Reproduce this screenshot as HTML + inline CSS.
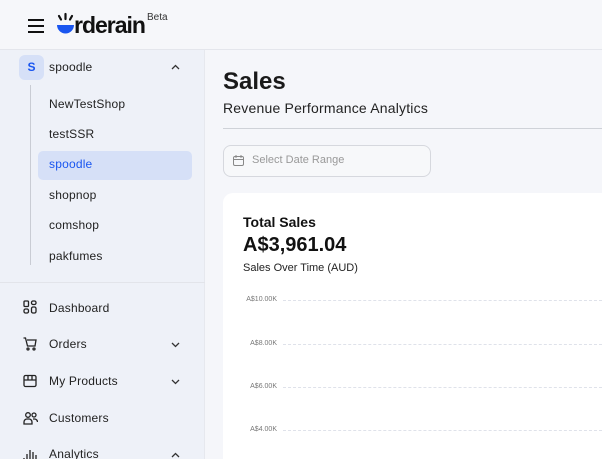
<!DOCTYPE html>
<html><head><style>
*{margin:0;padding:0;box-sizing:border-box}
html,body{width:602px;height:459px;overflow:hidden}
body{font-family:"Liberation Sans",sans-serif;background:#f5f6fa;position:relative;color:#111}
.hdr{position:absolute;left:0;top:0;width:602px;height:50px;background:#f6f7fa;border-bottom:1px solid #e4e6ec}
.side{position:absolute;left:0;top:50px;width:205px;height:409px;background:#eef1f8;border-right:1px solid #e6e8ee}
.abs{position:absolute}
.t{position:absolute;font-size:12px;color:#222;letter-spacing:.2px}
.nav{position:absolute;left:49px;font-size:12px;color:#222;letter-spacing:.2px}
.chev{position:absolute;left:171px}
.grid{position:absolute;left:283px;right:0;border-top:1px dashed #dfe2ea}
.gl{position:absolute;width:50px;left:227px;text-align:right;font-size:7px;color:#777}
</style></head><body>
<div class="hdr">
 <div class="abs" style="left:28px;top:19px;width:16px;height:2px;background:#111"></div>
 <div class="abs" style="left:28px;top:25px;width:16px;height:2px;background:#111"></div>
 <div class="abs" style="left:28px;top:31px;width:16px;height:2px;background:#111"></div>
 <svg class="abs" style="left:55px;top:12px" width="22" height="25" viewBox="0 0 22 25"><path d="M2 13h17a8.5 8.5 0 0 1-17 0z" fill="#1a56f0"/><path d="M10.5 2v5M4 4l2 3.5M17 4l-2 3.5" stroke="#111" stroke-width="2.2" stroke-linecap="round"/></svg>
 <div class="abs" style="left:74px;top:12px;font-size:23px;font-weight:bold;letter-spacing:-1px;color:#111">rderain</div>
 <div class="abs" style="left:147px;top:12px;font-size:10px;color:#333">Beta</div>
</div>
<div class="side">
 <div class="abs" style="left:19px;top:5px;width:25px;height:25px;border-radius:6px;background:#d6e0f7;color:#1a56f0;font-size:12px;font-weight:bold;text-align:center;line-height:25px">S</div>
 <div class="t" style="left:49px;top:10px">spoodle</div>
 <svg class="chev" style="top:14px" width="9" height="6" viewBox="0 0 9 6"><path d="M1 5l3.5-3.5L8 5" fill="none" stroke="#333" stroke-width="1.3"/></svg>
 <div class="abs" style="left:30px;top:35px;width:1px;height:180px;background:#c9ccd4"></div>
 <div class="t" style="left:49px;top:47px">NewTestShop</div>
 <div class="t" style="left:49px;top:77px">testSSR</div>
 <div class="abs" style="left:38px;top:101px;width:154px;height:29px;border-radius:5px;background:#d6e0f7"></div>
 <div class="t" style="left:49px;top:107px;color:#1a56f0">spoodle</div>
 <div class="t" style="left:49px;top:138px">shopnop</div>
 <div class="t" style="left:49px;top:168px">comshop</div>
 <div class="t" style="left:49px;top:199px">pakfumes</div>
 <div class="abs" style="left:0;top:232px;width:205px;height:1px;background:#e2e4ea"></div>
 <svg class="abs" style="left:23px;top:250px" width="14" height="14" viewBox="0 0 14 14" fill="none" stroke="#222" stroke-width="1.3"><rect x="1" y="1" width="4.5" height="5.5" rx="1"/><rect x="8.5" y="1" width="4.5" height="3.5" rx="1.5"/><rect x="1" y="9" width="4.5" height="4" rx="1.5"/><rect x="8.5" y="7" width="4.5" height="6" rx="1.5"/></svg>
 <div class="nav" style="top:251px">Dashboard</div>
 <svg class="abs" style="left:23px;top:287px" width="14" height="14" viewBox="0 0 14 14" fill="none" stroke="#222" stroke-width="1.3"><path d="M0.5 1h2l2 8h7.5l1-6H4"/><circle cx="5" cy="12" r="1"/><circle cx="11" cy="12" r="1"/></svg>
 <div class="nav" style="top:287px">Orders</div>
 <svg class="chev" style="top:292px" width="9" height="6" viewBox="0 0 9 6"><path d="M1 1l3.5 3.5L8 1" fill="none" stroke="#333" stroke-width="1.3"/></svg>
 <svg class="abs" style="left:23px;top:324px" width="14" height="14" viewBox="0 0 14 14" fill="none" stroke="#222" stroke-width="1.3"><rect x="1" y="1.5" width="12" height="11" rx="1.5"/><path d="M1 6h12M5 1.5v4.5M9 1.5v4.5"/></svg>
 <div class="nav" style="top:324px">My Products</div>
 <svg class="chev" style="top:329px" width="9" height="6" viewBox="0 0 9 6"><path d="M1 1l3.5 3.5L8 1" fill="none" stroke="#333" stroke-width="1.3"/></svg>
 <svg class="abs" style="left:23px;top:361px" width="15" height="14" viewBox="0 0 15 14" fill="none" stroke="#222" stroke-width="1.3"><circle cx="5" cy="4" r="2.3"/><circle cx="11" cy="4" r="2"/><path d="M1 13v-2a3 3 0 0 1 3-3h2a3 3 0 0 1 3 3v2zM10 8h1.5a3 3 0 0 1 3 3"/></svg>
 <div class="nav" style="top:361px">Customers</div>
 <svg class="abs" style="left:23px;top:398px" width="14" height="14" viewBox="0 0 14 14" fill="none" stroke="#222" stroke-width="1.3"><path d="M1 13v-3M4 13V6M7 13V2M10 13V4M13 13V7"/></svg>
 <div class="nav" style="top:397px">Analytics</div>
 <svg class="chev" style="top:402px" width="9" height="6" viewBox="0 0 9 6"><path d="M1 5l3.5-3.5L8 5" fill="none" stroke="#333" stroke-width="1.3"/></svg>
</div>
<div class="abs" style="left:223px;top:68px;font-size:24px;font-weight:bold;color:#1a1a1a">Sales</div>
<div class="abs" style="left:223px;top:100px;font-size:14px;color:#222;letter-spacing:.2px">Revenue Performance Analytics</div>
<div class="abs" style="left:223px;top:128px;width:379px;height:1px;background:#cfd2d8"></div>
<div class="abs" style="left:223px;top:145px;width:208px;height:32px;border:1px solid #d6d8de;border-radius:8px;background:#f7f8fa"></div>
<svg class="abs" style="left:233px;top:155px" width="11" height="11" viewBox="0 0 11 11" fill="none" stroke="#888" stroke-width="1"><rect x="0.5" y="1.5" width="10" height="9" rx="1.5"/><path d="M0.5 4.5h10M3 0v3M8 0v3"/></svg>
<div class="abs" style="left:252px;top:154px;font-size:11px;color:#999">Select Date Range</div>
<div class="abs" style="left:223px;top:193px;width:379px;height:266px;background:#fff;border-radius:10px 0 0 0"></div>
<div class="abs" style="left:243px;top:214px;font-size:14px;font-weight:bold">Total Sales</div>
<div class="abs" style="left:243px;top:234px;font-size:20px;font-weight:bold">A$3,961.04</div>
<div class="abs" style="left:243px;top:262px;font-size:11px;color:#222">Sales Over Time (AUD)</div>
<div class="gl" style="top:296px">A$10.00K</div><div class="grid" style="top:300px"></div>
<div class="gl" style="top:340px">A$8.00K</div><div class="grid" style="top:344px"></div>
<div class="gl" style="top:383px">A$6.00K</div><div class="grid" style="top:387px"></div>
<div class="gl" style="top:426px">A$4.00K</div><div class="grid" style="top:430px"></div>
</body></html>
